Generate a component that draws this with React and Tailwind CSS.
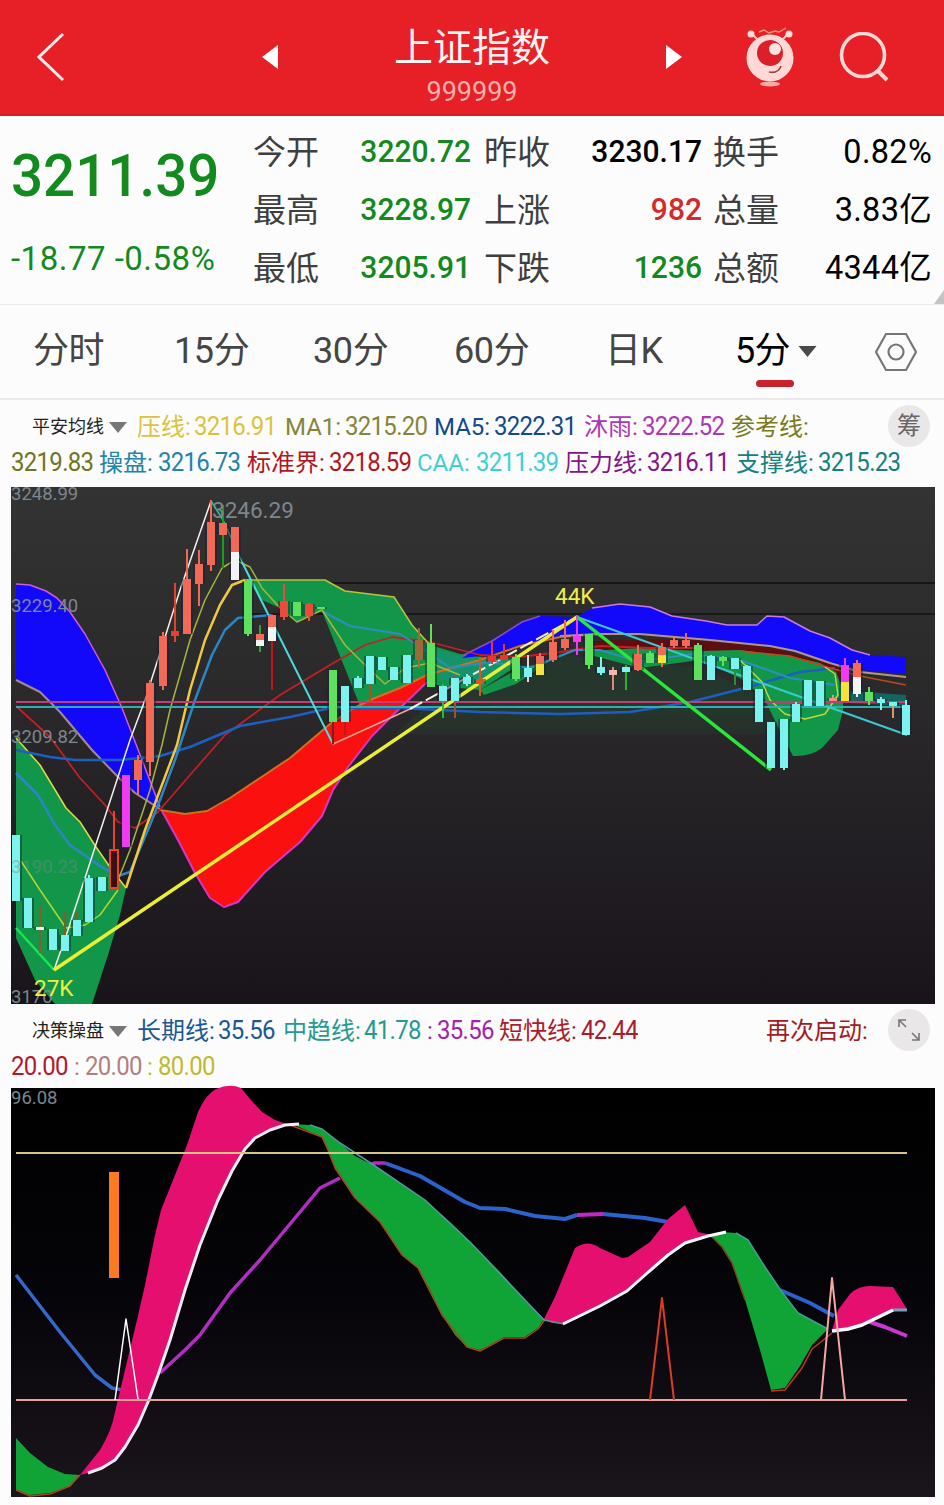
import React from "react";
import clsx from "clsx";

const STATS = [
  [
    { label: "今开", value: "3220.72", color: "text-[#128a1e]" },
    { label: "最高", value: "3228.97", color: "text-[#128a1e]" },
    { label: "最低", value: "3205.91", color: "text-[#128a1e]" },
  ],
  [
    { label: "昨收", value: "3230.17", color: "text-black" },
    { label: "上涨", value: "982", color: "text-[#d22b2b]" },
    { label: "下跌", value: "1236", color: "text-[#128a1e]" },
  ],
  [
    { label: "换手", value: "0.82%", color: "text-black" },
    { label: "总量", value: "3.83亿", color: "text-black" },
    { label: "总额", value: "4344亿", color: "text-black" },
  ],
];

const TABS = [
  { text: "分时", pos: "ml-[33px] w-[141px]" },
  { text: "15分", pos: "w-[139px]" },
  { text: "30分", pos: "w-[141px]" },
  { text: "60分", pos: "w-[151px]" },
  { text: "日K", pos: "w-[130px]" },
];

const MA_ROW_1 = [
  { label: "压线:", value: "3216.91", w: "w-[57px]", box: "w-[148px]", color: "text-[#dcc33c]" },
  { label: "MA1:", value: "3215.20", w: "w-[60px]", box: "w-[149px]", color: "text-[#85853a]" },
  { label: "MA5:", value: "3222.31", w: "w-[60px]", box: "w-[150px]", color: "text-[#12488c]" },
  { label: "沐雨:", value: "3222.52", w: "w-[58px]", box: "w-[147px]", color: "text-[#ab38b4]" },
  { label: "参考线:", value: "", w: "w-[81px]", box: "w-[84px]", color: "text-[#7b7a1c]" },
];

const MA_ROW_2 = [
  { label: "", value: "3219.83", w: "w-0", box: "w-[88px]", color: "text-[#6f7524]" },
  { label: "操盘:", value: "3216.73", w: "w-[59px]", box: "w-[148px]", color: "text-[#2383a8]" },
  { label: "标准界:", value: "3218.59", w: "w-[82px]", box: "w-[170px]", color: "text-[#b01622]" },
  { label: "CAA:", value: "3211.39", w: "w-[59px]", box: "w-[148px]", color: "text-[#3fd0d4]" },
  { label: "压力线:", value: "3216.11", w: "w-[82px]", box: "w-[171px]", color: "text-[#85158a]" },
  { label: "支撑线:", value: "3215.23", w: "w-[82px]", box: "w-[170px]", color: "text-[#158080]" },
];

const TREND_ROW_1 = [
  { label: "长期线:", value: "35.56", w: "w-[81px]", box: "w-[146px]", color: "text-[#1b5796]" },
  { label: "中趋线:", value: "41.78", w: "w-[81px]", box: "w-[144px]", color: "text-[#239a90]" },
  { label: ":", value: "35.56", w: "w-[10px]", box: "w-[72px]", color: "text-[#a321ac]" },
  { label: "短快线:", value: "42.44", w: "w-[82px]", box: "w-[267px]", color: "text-[#ac1a2c]" },
  { label: "再次启动:", value: "", w: "w-[106px]", box: "w-[106px]", color: "text-[#a01c22]" },
];

const TREND_ROW_2 = [
  { label: "", value: "20.00", w: "w-0", box: "w-[63px]", color: "text-[#b3152c]" },
  { label: ":", value: "20.00", w: "w-[11px]", box: "w-[73px]", color: "text-[#b08080]" },
  { label: ":", value: "80.00", w: "w-[11px]", box: "w-[73px]", color: "text-[#c0b92e]" },
];

const RED = "#f26a55";
const CYAN = "#7df3f0";
const GREEN = "#5ee25e";
const MAGENTA = "#f03cf0";
const YELLOW = "#f5e23c";
const WHITE = "#f4f4f4";

// x, body top, body bottom, wick top, wick bottom, body colour, wick colour
const CANDLES = [
  [16, 835, 901, 835, 901, CYAN],
  [28, 898, 928, 898, 928, CYAN],
  [40, 927, 930, 905, 953, WHITE, "#8a5a2b"],
  [53, 929, 950, 929, 950, CYAN],
  [65, 935, 951, 912, 951, CYAN, "#8a5a2b"],
  [77, 920, 936, 911, 936, CYAN, "#8a5a2b"],
  [89, 878, 922, 875, 922, CYAN],
  [102, 877, 891, 877, 891, CYAN],
  [126, 775, 847, 775, 847, MAGENTA],
  [138, 760, 780, 755, 795, RED],
  [150, 683, 762, 680, 776, RED],
  [163, 636, 686, 632, 690, RED],
  [175, 631, 636, 583, 642, "#e8402e"],
  [187, 579, 634, 549, 634, RED],
  [199, 564, 584, 550, 606, RED],
  [211, 522, 565, 500, 571, RED],
  [223, 523, 535, 505, 568, RED, "#15a01f"],
  [235, 527, 552, 527, 552, RED],
  [235, 552, 580, 552, 580, WHITE],
  [248, 581, 634, 579, 636, GREEN],
  [260, 634, 640, 625, 652, RED, "#2fa32f"],
  [260, 640, 646, 640, 646, WHITE],
  [272, 615, 627, 614, 690, RED, "#c4141a"],
  [272, 627, 641, 627, 641, WHITE],
  [284, 601, 617, 584, 620, "#ee4a3a"],
  [297, 602, 616, 602, 616, GREEN],
  [309, 604, 616, 603, 621, "#ee4a3a"],
  [321, 607, 609, 607, 609, GREEN],
  [333, 670, 722, 670, 744, GREEN, "#7a2018"],
  [345, 686, 722, 686, 735, CYAN, "#b02018"],
  [358, 678, 688, 676, 688, CYAN],
  [370, 656, 684, 656, 703, CYAN, "#b0501c"],
  [382, 657, 670, 657, 670, CYAN],
  [394, 667, 680, 667, 680, CYAN],
  [407, 655, 683, 655, 683, CYAN],
  [419, 640, 660, 628, 668, "#9a6a3a"],
  [431, 643, 687, 624, 687, GREEN],
  [443, 686, 701, 684, 718, CYAN, "#35b535"],
  [455, 678, 701, 676, 718, CYAN, "#a84a3a"],
  [467, 677, 684, 674, 686, CYAN],
  [480, 679, 684, 657, 696, "#d8562c"],
  [492, 656, 662, 641, 664, "#e8362c"],
  [504, 655, 660, 644, 660, "#e8362c"],
  [516, 657, 679, 654, 681, GREEN],
  [528, 668, 677, 655, 682, CYAN, "#e0d8d0"],
  [540, 656, 664, 653, 664, RED],
  [540, 664, 675, 664, 675, YELLOW],
  [553, 642, 660, 630, 662, RED],
  [565, 639, 648, 620, 650, RED],
  [577, 636, 642, 615, 655, MAGENTA],
  [589, 634, 665, 634, 669, GREEN],
  [601, 667, 673, 657, 675, CYAN],
  [613, 670, 675, 667, 690, "#f2b8ac", "#e08a78"],
  [626, 667, 672, 665, 690, CYAN, "#2fae3a"],
  [638, 654, 670, 645, 671, RED],
  [650, 653, 663, 651, 663, GREEN],
  [662, 647, 655, 643, 667, RED],
  [662, 655, 663, 655, 663, YELLOW],
  [674, 640, 646, 638, 648, RED],
  [686, 640, 646, 633, 648, RED],
  [698, 645, 680, 643, 680, GREEN],
  [711, 656, 680, 655, 680, CYAN],
  [723, 657, 661, 656, 666, GREEN],
  [735, 658, 669, 658, 685, CYAN, "#2f8a3a"],
  [747, 666, 690, 665, 690, CYAN],
  [759, 689, 722, 689, 722, CYAN],
  [771, 722, 768, 722, 768, CYAN],
  [784, 719, 768, 719, 770, CYAN],
  [796, 704, 722, 702, 722, CYAN],
  [808, 680, 706, 680, 706, CYAN],
  [820, 681, 706, 681, 706, CYAN],
  [833, 698, 701, 695, 701, "#f0927c"],
  [845, 665, 682, 658, 682, MAGENTA],
  [845, 682, 701, 682, 701, YELLOW],
  [857, 663, 677, 660, 677, RED],
  [857, 677, 694, 677, 697, WHITE],
  [869, 692, 701, 687, 705, GREEN],
  [881, 699, 703, 697, 710, CYAN],
  [893, 702, 706, 702, 718, CYAN, "#d09a6a"],
  [906, 705, 735, 700, 735, CYAN],
];

function Candle({ data }) {
  const [x, top, bottom, wickTop, wickBottom, fill, wick] = data;
  return (
    <g>
      <rect x={x - 1} y={wickTop} width="2" height={wickBottom - wickTop} fill={wick || fill} />
      <rect x={x - 6} y={top} width="12" height={bottom - top} fill="#123" opacity="0.45" />
      <rect x={x - 4} y={top} width="8" height={bottom - top} fill={fill} />
    </g>
  );
}

function Line({ points, color, width = 1.5, ...rest }) {
  return (
    <polyline
      points={points}
      fill="none"
      stroke={color}
      strokeWidth={width}
      strokeLinejoin="round"
      {...rest}
    />
  );
}

function Caret({ className }) {
  return (
    <svg viewBox="0 0 18 11" className={className}>
      <path d="M0 0h18L9 11z" fill="currentColor" />
    </svg>
  );
}

function Legend({ items }) {
  return items.map((item, i) => (
    <div key={i} className={clsx("flex shrink-0", item.box, item.color)}>
      <span className={clsx("shrink-0", item.w)}>{item.label}</span>
      <span className="tracking-[-0.7px] scale-y-105">{item.value}</span>
    </div>
  ));
}

function Header() {
  return (
    <header className="h-[116px] bg-[#e71f27] flex text-white border-b-2 border-[#cf1d24]">
      <svg viewBox="0 0 28 50" className="w-7 h-[50px] ml-[37px] mt-8 shrink-0">
        <path d="M26 2L2 25l24 23" fill="none" stroke="#ffeceb" strokeWidth="3" />
      </svg>
      <svg viewBox="0 0 16 24" className="w-4 h-6 ml-[197px] mt-[45px] shrink-0">
        <path d="M16 0v24L0 12z" fill="#fff" />
      </svg>
      <div className="w-[388px] text-center shrink-0 pt-[19px]">
        <h1 className="text-[39px] leading-[58px] font-normal text-[#fff4f2]">上证指数</h1>
        <p className="text-[27px] leading-[30px] text-[#f9b0aa]">999999</p>
      </div>
      <svg viewBox="0 0 16 24" className="w-4 h-6 mt-[45px] shrink-0">
        <path d="M0 0v24l16-12z" fill="#fff" />
      </svg>
      <svg viewBox="0 0 50 60" className="w-[50px] h-[60px] ml-[63px] mt-[27px] shrink-0">
        <path d="M13 13L7 7M37 13l6-6" stroke="#ffc9c3" strokeWidth="2" />
        <path d="M14 5l5-2 5 3 6-2 4 1 7-4" fill="none" stroke="#ff9d78" strokeWidth="1.4" />
        <circle cx="6" cy="7" r="3.5" fill="#ffdcd8" />
        <circle cx="44" cy="7" r="3.5" fill="#ffdcd8" />
        <ellipse cx="25" cy="57" rx="10" ry="2.6" fill="#f9a9a2" />
        <circle cx="25" cy="31" r="23.5" fill="#ffd9d5" />
        <circle cx="25" cy="26" r="13" fill="#dc1f2b" />
        <circle cx="30" cy="22" r="6" fill="#ffe5e0" />
        <path d="M24 45q9 2 12-6" fill="none" stroke="#a83a3a" strokeWidth="1.6" />
      </svg>
      <svg viewBox="0 0 50 50" className="w-[50px] h-[50px] ml-[44px] mt-8 shrink-0">
        <circle cx="24" cy="23" r="21.5" fill="none" stroke="#ffd9d5" strokeWidth="3.6" />
        <path d="M38 38l10 10" stroke="#ffd9d5" strokeWidth="4" />
      </svg>
    </header>
  );
}

function Quote() {
  return (
    <section className="relative h-[189px] border-b border-[#ececec] flex">
      <div className="w-[253px] pl-[11px] text-[#128a1e] font-medium shrink-0">
        <div className="text-[56.5px] leading-[64px] mt-[28px] origin-center scale-y-105">3211.39</div>
        <div className="text-[33px] leading-10 mt-[31px] tracking-[0.5px] whitespace-nowrap font-normal">
          -18.77 -0.58%
        </div>
      </div>
      {STATS.map((col, i) => (
        <div
          key={i}
          className={clsx(
            "pt-[7px]",
            i === 0 && "w-[218px] mr-[13px]",
            i === 1 && "w-[218px] mr-[11px]",
            i === 2 && "w-[219px]"
          )}
        >
          {col.map((row) => (
            <div key={row.label} className="h-[58px] flex items-center justify-between whitespace-nowrap">
              <span className="text-[33px] leading-none text-[#3f3f3f]">{row.label}</span>
              <span
                className={clsx(
                  "leading-none",
                  i === 2 ? "text-[32.5px] tracking-[0.3px]" : "text-[30px] font-medium scale-y-105",
                  row.color
                )}
              >
                {row.value}
              </span>
            </div>
          ))}
        </div>
      ))}
      <svg viewBox="0 0 10 14" className="absolute right-0 bottom-0 w-2.5 h-3.5">
        <path d="M10 0v14H0z" fill="#c4c4c4" />
      </svg>
    </section>
  );
}

function Tabs() {
  return (
    <nav className="h-[95px] border-b-2 border-[#ebe9e9] flex items-start pt-[22px] text-[36px] leading-[48px] text-[#454545] whitespace-nowrap">
      {TABS.map((tab) => (
        <div key={tab.text} className={clsx("shrink-0 tracking-[-0.4px]", tab.pos)}>
          {tab.text}
        </div>
      ))}
      <div className="w-[140px] shrink-0">
        <div className="flex items-center text-black">
          <span className="w-[63px] tracking-[-0.8px]">5分</span>
          <Caret className="w-[19px] h-[11px] text-[#4a4a4a]" />
        </div>
        <div className="w-[38px] h-[7px] rounded-full bg-[#c9222c] ml-[21px] mt-[5px]" />
      </div>
      <svg viewBox="0 0 42 40" className="w-[42px] h-10 mt-[5px] shrink-0">
        <path d="M11 2h20l10 18-10 18H11L1 20z" fill="none" stroke="#777" strokeWidth="2.2" />
        <circle cx="21" cy="20" r="7.5" fill="none" stroke="#777" strokeWidth="2.2" />
      </svg>
    </nav>
  );
}

function IndicatorName({ name }) {
  return (
    <div className="flex items-center w-[105px] shrink-0 text-[#222]">
      <span className="text-[18px] w-[77px]">{name}</span>
      <Caret className="w-[18px] h-[11px] text-[#777]" />
    </div>
  );
}

function PriceChart() {
  return (
    <svg viewBox="11 487 924 517" className="block w-[924px] h-[517px] ml-[11px]">
      <defs>
        <linearGradient id="priceBg" x1="0" y1="0" x2="0" y2="1">
          <stop offset="0" stopColor="#333334" />
          <stop offset="0.35" stopColor="#2c2b2c" />
          <stop offset="0.6" stopColor="#252226" />
          <stop offset="1" stopColor="#18141a" />
        </linearGradient>
        <linearGradient id="shade" x1="0" y1="0" x2="0" y2="1">
          <stop offset="0.7" stopColor="#25372c" />
          <stop offset="1" stopColor="#25372c" stopOpacity="0.5" />
        </linearGradient>
      </defs>
      <rect x="11" y="487" width="924" height="517" fill="url(#priceBg)" />
      <Line points="247,583 935,583" color="#161616" width={2} />
      <Line points="247,614 935,614" color="#191919" width={2} />

      {/* cloud areas */}
      <path d="M395 734L440 695 560 655 700 668 770 700 795 734z" fill="url(#shade)" />
      <path d="M16 584L30 585 46 591 57 598 70 612 85 634 105 670 122 708 139 752 160 807 135 793 118 777 92 750 60 712 40 692 16 680z" fill="#1208fa" />
      <path d="M16 738L40 765 66 808 80 822 96 847 112 870 126 888 120 915 108 955 92 1004H55L35 980 16 938z" fill="#12974a" />
      <path d="M248 580H325L345 591 394 597 412 625 430 645 460 654 490 658 520 657 520 664 480 690 440 686 425 680 360 706 322 611 309 615 297 622 280 608 262 600z" fill="#12974a" />
      <path d="M436 650L480 661 520 657 510 668 480 682 440 680z" fill="#17936c" />
      <path d="M480 690L520 668 548 662 516 684 484 695z" fill="#12974a" />
      <path d="M162 811Q190 817 207 811 218 807 230 798L260 778 290 758 330 724 352 709 375 698 400 688 427 675 425 683 395 713 372 736 348 767 333 790 322 816 300 842 265 872 238 902 Q224 911 210 898L195 873 178 840z" fill="#fb1010" />
      <path d="M590 641L680 639 770 647 830 664 847 670 840 680 800 662 750 653 690 650 590 652z" fill="#5e0d10" />
      <path d="M462 658L492 641 522 622 540 616 577 617 592 608 620 604 650 607 672 616 706 621 727 625 757 625 767 616 784 617 810 631 830 638 852 650 870 655 906 657V674L860 670 830 663 795 651 770 646 710 640 640 634 590 634 560 636 520 645 490 655z" fill="#1208fa" />
      <path d="M590 651L640 648 700 651 740 650 790 656 820 663 836 672 843 690 843 710 838 730 822 748Q810 757 793 756L782 735 765 700 740 678 700 660 640 668 590 655z" fill="#12974a" />
      <path d="M850 691L906 695V706L850 703z" fill="#146560" />

      {/* moving averages */}
      <Line points="16,584 30,585 46,591 57,598 70,612 85,634 105,670 122,708 139,752 160,807" color="#d05ad8" />
      <Line points="16,680 40,692 60,712 92,750 118,777 135,793 160,809" color="#a58a86" width={2} />
      <Line points="162,811 178,840 195,873 210,898 224,907 238,902 265,872 300,842 322,816 333,790 348,767 372,736 395,713 427,682" color="#d536c6" width={2} />
      <Line points="160,810 185,814 207,811 230,798 260,778 290,758 330,724 352,709 375,698 400,688 427,675 480,660 520,646 560,637 600,634" color="#d2701e" width={2} />
      <Line points="16,738 40,765 66,808 80,822 96,847 112,870 126,888" color="#d8de3c" />
      <Line points="16,706 50,737 80,778 105,805 118,822 135,828 158,812 190,775 225,735 280,695 330,665 365,645 392,637 430,642 480,655 520,657 560,652 600,646 650,648 700,648" color="#c41f24" width={1.8} />
      <Line points="16,750 50,757 75,760 120,760 160,756 190,747 240,726 290,717 330,708 400,708 480,712 560,714 630,712 690,702 745,688 800,672 835,668" color="#1c5fbe" width={2.5} />
      <Line points="16,773 38,795 55,825 70,845 100,866 118,876 130,872 150,825 160,800 175,760 195,700 212,655 225,630 238,618 272,615" color="#2b86c8" width={2.5} />
      <Line points="322,611 350,626 400,634 425,650 450,668 490,662 530,668 575,650 600,650 640,662 690,654 740,660 790,678 835,685" color="#2c8fbd" width={2} />
      <Line points="116,885 130,850 150,790 162,745 170,710 190,640 205,600 222,568 235,560 250,567 262,588 280,608 297,622 322,610 345,645 365,665 385,684 405,668 430,663 460,675" color="#a9b53c" />
      <Line points="126,888 145,830 160,790 177,745 190,690 205,640 220,605 232,585 245,580" color="#f2c83e" width={2.5} />
      <Line points="245,580 325,580 345,591 394,597 412,625 430,645" color="#b8c43a" />
      <Line points="21,861 40,890 66,928 85,925 100,915 118,890" color="#b2d62c" />
      <Line points="462,656 492,641 522,622 540,616" color="#8c4ad0" />
      <Line points="592,608 620,604 650,607 672,616 706,621 727,625 757,625 767,616 784,617 810,631 830,638 852,650 870,655" color="#c97adf" />
      <Line points="560,636 600,634 640,634 710,640 770,646 795,651 830,663 860,672 906,677" color="#b59684" width={2} />
      <Line points="740,651 790,656 830,668 860,676 906,685" color="#b84a1c" />
      <Line points="740,660 762,682 770,700 785,714 805,719 825,714 838,695 835,674 825,667" color="#c0d83c" />
      <Line points="16,702 907,702" color="#c83a72" width={2} />
      <Line points="16,707 907,707" color="#2fb0b0" width={2} />

      {/* zigzag between pivots */}
      <Line points="16,928 54,970" color="#19e454" width={2.5} />
      <Line points="54,970 68,930 130,740 145,700 180,590 211,501" color="#f6f0f2" />
      <Line points="211,501 223,520 242,562" color="#2bc8a0" />
      <Line points="242,562 333,744" color="#4adce0" width={2} />
      <Line points="333,744 410,709" color="#f2a890" />
      <Line points="410,709 577,617" color="#f4efe8" width={2} strokeDasharray="14 4" />
      <Line points="54,970 577,617" color="#eaee34" width={3.5} />
      <Line points="577,617 907,735" color="#3cc8d0" width={2} />
      <Line points="577,617 771,770" color="#2be63a" width={3.5} />

      <rect x="110" y="850" width="8" height="38" fill="#3a1010" stroke="#e84426" strokeWidth="2" />
      <Line points="114,811 114,850" color="#e84426" width={2} />
      {CANDLES.map((c, i) => (
        <Candle key={i} data={c} />
      ))}

      <g fill="#7c878d" fontSize="18.5">
        <text x="11" y="500">3248.99</text>
        <text x="11" y="612">3229.40</text>
        <text x="11" y="743">3209.82</text>
        <text x="11" y="873" opacity="0.45">3190.23</text>
        <text x="11" y="1003">3170</text>
        <text x="212" y="518" fontSize="22.5">3246.29</text>
      </g>
      <g fill="#f1ef45" fontSize="22.5">
        <text x="555" y="604">44K</text>
        <text x="34" y="996">27K</text>
      </g>
    </svg>
  );
}

function TrendChart() {
  return (
    <svg viewBox="11 1088 924 409" className="block w-[924px] h-[409px] ml-[11px] overflow-visible">
      <defs>
        <linearGradient id="trendBg" x1="0" y1="0" x2="0" y2="1">
          <stop offset="0" stopColor="#000" />
          <stop offset="0.5" stopColor="#050408" />
          <stop offset="1" stopColor="#1b151c" />
        </linearGradient>
      </defs>
      <rect x="11" y="1088" width="924" height="409" fill="url(#trendBg)" />

      {/* long-term line */}
      <Line points="16,1275 60,1332 95,1375 112,1388 122,1390" color="#3568cc" width={3.5} />
      <Line points="160,1373 185,1350 200,1335 230,1293 260,1260 300,1212 320,1188 340,1178" color="#b22dc4" width={3.5} />
      <Line points="366,1166 375,1163 385,1163" color="#b22dc4" width={3.5} />
      <Line points="385,1163 420,1176 465,1202 480,1208 505,1209 535,1216 565,1219 577,1215" color="#2c62cc" width={4} />
      <Line points="577,1215 603,1214" color="#c228c8" width={4} />
      <Line points="603,1214 645,1218 668,1222" color="#2c62cc" width={4} />
      <Line points="780,1290 810,1303 834,1316" color="#2c62cc" width={4} />
      <Line points="867,1321 885,1327 907,1336" color="#c936d0" width={4} />

      <path d="M80 1475L100 1450Q112 1430 115 1412L125 1370 137 1320 145 1285 155 1235 161 1210 175 1175 187 1145 198 1112Q206 1094 216 1089 230 1083 241 1088L250 1099 262 1112 275 1120 290 1125 270 1130 255 1138 245 1149 232 1171 218 1200 200 1245 185 1290 170 1340 158 1375 148 1402 138 1425 125 1447 115 1460 102 1468 88 1473z" fill="#e40f6e" />
      <path d="M16 1438L30 1453 48 1467 65 1474 80 1475 70 1486 50 1493 30 1495 16 1490z" fill="#10a335" />
      <path d="M292 1124L310 1125 322 1129 340 1143 355 1156 375 1166 400 1183 425 1200 450 1222 470 1242 500 1272 525 1300 544 1319 538 1328 525 1337 504 1337 490 1345 480 1350 467 1347 455 1335 442 1315 430 1290 418 1268 402 1255 380 1222 355 1198 335 1168 328 1150 322 1137z" fill="#10a335" />
      <path d="M544 1319L555 1297 575 1248Q588 1239 600 1248L622 1258 628 1257 650 1242 668 1219 685 1205 698 1232 712 1235 685 1243 668 1255 645 1275 627 1291 600 1306 564 1324 552 1323z" fill="#e40f6e" />
      <path d="M710 1235L722 1232 736 1233 748 1240 765 1267 782 1292 798 1313 828 1329 812 1345 800 1366 785 1388 771 1390 760 1350 745 1300 732 1263 722 1247z" fill="#10a335" />
      <path d="M832 1330L838 1310 850 1294Q858 1286 870 1286L893 1287 907 1309 893 1310 862 1325 838 1331z" fill="#e40f6e" />

      <Line points="16,1490 30,1496 50,1494 70,1486 80,1475" color="#a8461c" />
      <Line points="290,1125 322,1137 328,1150 335,1168 355,1198 380,1222 402,1255 418,1268 442,1315 467,1347 480,1351 504,1338 525,1338 538,1329 546,1318" color="#a8461c" />
      <Line points="710,1235 722,1247 732,1263 745,1300" color="#7a4220" />
      <Line points="771,1391 785,1390 802,1368 812,1349 832,1333" color="#c4342a" />
      <Line points="310,1125 322,1129 340,1143 375,1166 425,1200 470,1242 525,1300 544,1320 564,1324" color="#4f9aa0" />
      <Line points="736,1233 748,1240 765,1267 782,1292 798,1313 828,1329" color="#3f9f90" />
      <Line points="893,1310 907,1310" color="#6aa6b8" width={3} />
      <Line points="88,1473 102,1468 115,1460 125,1447 138,1425 148,1402 158,1375 170,1340 185,1290 200,1245 218,1200 232,1171 245,1149 255,1138 270,1130 285,1125 299,1124" color="#fdeef6" width={3} />
      <Line points="563,1324 600,1306 627,1291 645,1275 668,1255 685,1243 708,1236 726,1232" color="#fff" width={3} />
      <Line points="832,1331 848,1329 862,1325 893,1310" color="#fff" width={3.5} />

      <Line points="16,1153 907,1153" color="#d4c488" width={2} />
      <Line points="16,1400 907,1400" color="#e8a09c" width={2} />
      <rect x="109" y="1172" width="10" height="106" fill="#f97a22" />
      <Line points="115,1400 126,1319 138,1399" color="#fff" />
      <Line points="650,1400 662,1298 674,1400" color="#e03c28" width={2} />
      <Line points="821,1400 832,1278 845,1400" color="#f6a8a6" width={2} />
      <text x="11" y="1103.5" fill="#7c878d" fontSize="18.5">
        96.08
      </text>
    </svg>
  );
}

export default function App() {
  return (
    <div className="w-[944px] h-[1505px] overflow-hidden bg-[#fdfcfc] font-['Roboto','Noto_Sans_CJK_SC',sans-serif]">
      <Header />
      <Quote />
      <Tabs />
      <section className="h-[87px] pt-[9px] text-[24px] leading-9 whitespace-nowrap">
        <div className="flex pl-8 h-9">
          <IndicatorName name="平安均线" />
          <Legend items={MA_ROW_1} />
          <div className="size-[42px] rounded-full bg-[#e9e7e7] text-[#666] text-[24px] leading-[42px] text-center -mt-1 ml-[73px] shrink-0">
            筹
          </div>
        </div>
        <div className="flex pl-[11px] h-9">
          <Legend items={MA_ROW_2} />
        </div>
      </section>
      <PriceChart />
      <section className="h-[84px] pt-[9px] text-[24px] leading-9 whitespace-nowrap">
        <div className="flex pl-8 h-9">
          <IndicatorName name="决策操盘" />
          <Legend items={TREND_ROW_1} />
          <div className="size-[42px] rounded-full bg-[#e9e7e7] -mt-1 ml-4 shrink-0 flex items-center justify-center">
            <svg viewBox="0 0 24 24" className="size-6">
              <path d="M2 9V2h7M2 2l7 7M22 15v7h-7M22 22l-7-7" fill="none" stroke="#777" strokeWidth="1.6" />
            </svg>
          </div>
        </div>
        <div className="flex pl-[11px] h-9">
          <Legend items={TREND_ROW_2} />
        </div>
      </section>
      <TrendChart />
    </div>
  );
}
